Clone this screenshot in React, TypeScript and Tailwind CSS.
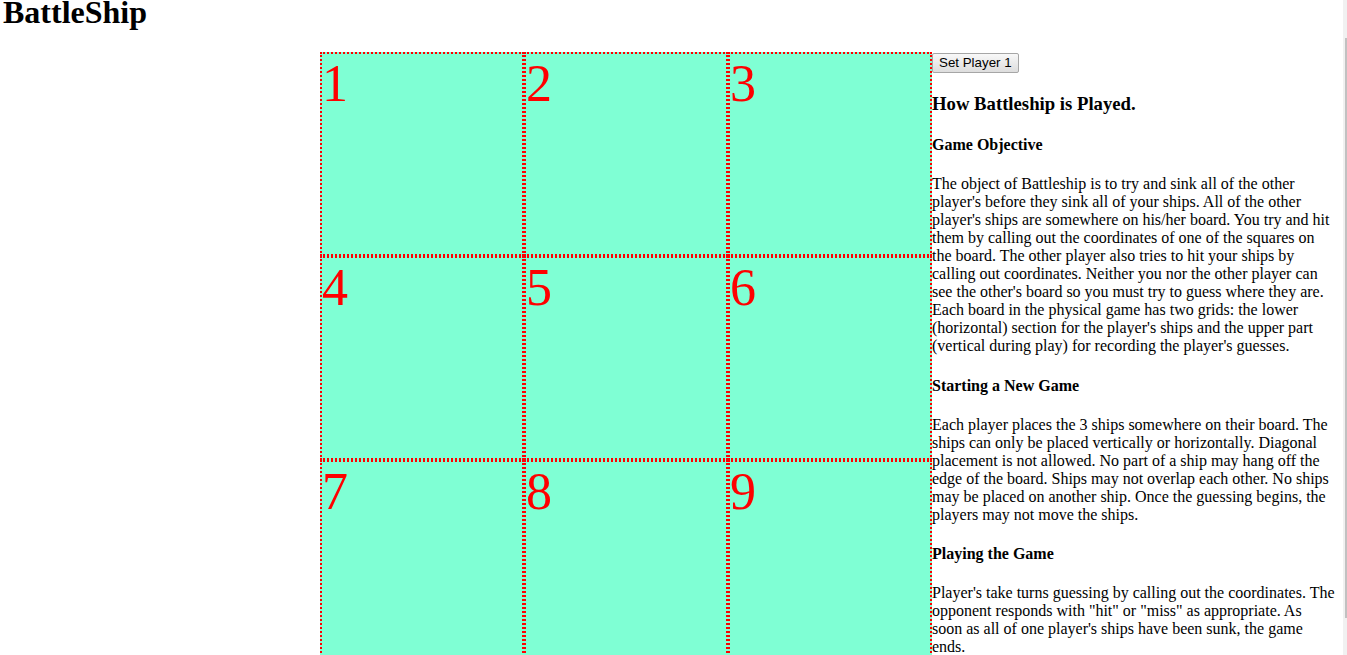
const cells = [1, 2, 3, 4, 5, 6, 7, 8, 9];

export default function App() {
  return (
    <div className="flex h-[655px] w-full overflow-hidden bg-white font-['Liberation_Serif','Times_New_Roman',serif] text-black">
      <div className="min-w-0 flex-1">
        <h1 className="pl-[3px] text-[32px] font-bold leading-[24px]">BattleShip</h1>

        <div className="mt-[28px] flex items-start pl-[320px]">
          {/* Board */}
          <div className="grid w-[612px] shrink-0 grid-cols-3">
            {cells.map((n) => (
              <div
                key={n}
                className="h-[204px] border-2 border-dotted border-[#ff0000] bg-[#7fffd4] text-[52px] leading-[1.15] text-[#ff0000]"
              >
                {n}
              </div>
            ))}
          </div>

          {/* Rules */}
          <div className="w-[403px] shrink-0 text-[16px] leading-[18px]">
            <button className="mt-[1px] block h-[20px] rounded-[2px] border border-[#a6a6a6] bg-linear-to-b from-[#f8f8f8] to-[#dddddd] px-[6px] font-['Liberation_Sans',Arial,sans-serif] text-[13.33px] leading-[16px] text-black">
              Set Player 1
            </button>

            <h3 className="my-[18.72px] text-[18.72px] font-bold leading-[23px]">
              How Battleship is Played.
            </h3>

            <h4 className="my-[21.28px] font-bold">Game Objective</h4>
            <p className="my-4">
              The object of Battleship is to try and sink all of the other player's before they sink
              all of your ships. All of the other player's ships are somewhere on his/her board. You
              try and hit them by calling out the coordinates of one of the squares on the board. The
              other player also tries to hit your ships by calling out coordinates. Neither you nor
              the other player can see the other's board so you must try to guess where they are.
              Each board in the physical game has two grids: the lower (horizontal) section for the
              player's ships and the upper part (vertical during play) for recording the player's
              guesses.
            </p>

            <h4 className="my-[21.28px] font-bold">Starting a New Game</h4>
            <p className="my-4">
              Each player places the 3 ships somewhere on their board. The ships can only be placed
              vertically or horizontally. Diagonal placement is not allowed. No part of a ship may
              hang off the edge of the board. Ships may not overlap each other. No ships may be placed
              on another ship. Once the guessing begins, the players may not move the ships.
            </p>

            <h4 className="my-[21.28px] font-bold">Playing the Game</h4>
            <p className="my-4">
              Player's take turns guessing by calling out the coordinates. The opponent responds with
              "hit" or "miss" as appropriate. As soon as all of one player's ships have been sunk, the
              game ends.
            </p>
          </div>
        </div>
      </div>

      {/* Scrollbar strip */}
      <div className="flex w-[4px] shrink-0 flex-col bg-[#f1f1f1]">
        <div className="h-[38px]" />
        <div className="ml-[2px] h-[580px] w-[2px] bg-[#c1c1c1]" />
      </div>
    </div>
  );
}
